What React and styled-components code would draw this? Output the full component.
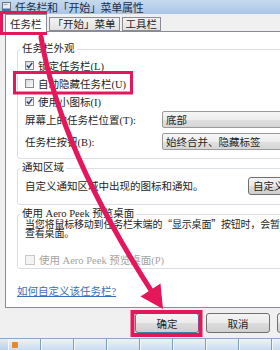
import React from "react";
import styled, { createGlobalStyle } from "styled-components";

const RED = "#e5175b";

const Global = createGlobalStyle`
  html, body { margin: 0; padding: 0; background: #f0f0f0; }
  body { width: 280px; height: 350px; overflow: hidden; }
`;

const Screen = styled.div`
  position: relative;
  width: 280px;
  height: 350px;
  overflow: hidden;
  background: #f0f0f0;
  font-family: "Liberation Serif", "Noto Sans CJK SC", serif;
  font-size: 10.5px;
  color: #1e1e1e;
`;

const Dialog = styled.div`
  width: 350px;
  display: flex;
  flex-direction: column;
`;

const TitleBar = styled.div`
  height: 14px;
  display: flex;
  align-items: center;
  gap: 3px;
  padding-left: 1px;
  background: linear-gradient(#c6daef, #a9c5e6);
  color: #1c2d4a;
  font-family: "Noto Sans CJK SC", sans-serif;
  font-size: 11px;
  letter-spacing: -0.3px;
  line-height: 14px;
`;

const Body = styled.div`
  padding: 0 5px;
  display: flex;
  flex-direction: column;
`;

const TabStrip = styled.div`
  height: 17px;
  display: flex;
  align-items: flex-end;
`;

const Tab = styled.div`
  box-sizing: border-box;
  height: ${(p) => (p.$active ? 18 : 14)}px;
  margin-bottom: ${(p) => (p.$active ? -1 : 0)}px;
  margin-left: ${(p) => (p.$first ? 0 : 2)}px;
  padding: 0 ${(p) => (p.$active ? 4 : 3)}px;
  border: 1px solid #898c95;
  border-bottom: ${(p) => (p.$active ? "none" : "1px solid #898c95")};
  background: ${(p) => (p.$active ? "#fff" : "linear-gradient(#f3f3f3, #e2e2e2)")};
  position: relative;
  z-index: ${(p) => (p.$active ? 1 : 0)};
  display: flex;
  align-items: center;
  font-family: "Noto Sans CJK SC", sans-serif;
  line-height: 12px;
`;

const Panel = styled.div`
  box-sizing: border-box;
  height: 277px;
  background: #fff;
  border: 1px solid #898c95;
  padding: 10px 12px 0 11px;
  display: flex;
  flex-direction: column;
`;

const Group = styled.fieldset`
  margin: ${(p) => p.$mt || 0}px 0 0;
  padding: 0 8px ${(p) => p.$pb || 0}px 7px;
  border: 1px solid #d9dfe4;
  border-radius: 3px;
  min-width: 0;
  display: flex;
  flex-direction: column;
`;

const Legend = styled.legend`
  margin-left: -5px;
  padding: 0 2px;
  height: 14px;
  line-height: 14px;
`;

const CheckRow = styled.div`
  height: ${(p) => p.$h || 18}px;
  margin-top: ${(p) => p.$mt || 0}px;
  display: flex;
  align-items: center;
  gap: 4px;
  color: ${(p) => (p.$disabled ? "#a3a3a3" : "inherit")};
`;

const Box = styled.span`
  box-sizing: border-box;
  width: ${(p) => (p.$disabled ? 10 : 9)}px;
  height: ${(p) => (p.$disabled ? 10 : 9)}px;
  border: 1px solid ${(p) => (p.$disabled ? "#c8c8c8" : "#8a8c8f")};
  background: ${(p) =>
    p.$disabled ? "#f4f4f4" : "linear-gradient(135deg, #d8d9db, #fbfbfb)"};
  display: inline-flex;
  align-items: center;
  justify-content: center;
  flex: none;
`;

const SelectRow = styled.div`
  height: 18px;
  margin-top: ${(p) => p.$mt || 0}px;
  display: grid;
  grid-template-columns: 137px 150px;
  align-items: center;
`;

const Select = styled.div`
  box-sizing: border-box;
  height: 17px;
  border: 1px solid #9a9a9a;
  border-radius: 2px;
  padding-left: 3px;
  background: linear-gradient(#f6f6f6 0%, #ededed 50%, #e0e0e0 51%, #d6d6d6 100%);
  display: flex;
  align-items: center;
`;

const NotifyRow = styled.div`
  height: 19px;
  margin-top: 1px;
  display: grid;
  grid-template-columns: 223px 60px;
  align-items: center;
`;

const Desc = styled.div`
  margin-top: -2px;
  font-size: 10px;
  line-height: 9px;
  letter-spacing: -0.2px;
  white-space: nowrap;
`;

const Quote = styled.span`
  font-family: "Noto Sans CJK SC", sans-serif;
`;

const Link = styled.div`
  margin-top: 16px;
  height: 14px;
  line-height: 14px;
  color: #3d6fb8;
  text-decoration: underline;
  align-self: flex-start;
`;

const Button = styled.div`
  box-sizing: border-box;
  width: ${(p) => p.$w || 64}px;
  height: ${(p) => p.$h || 20}px;
  border: 1px solid ${(p) => (p.$default ? "#3c7fb1" : "#707070")};
  border-radius: 3px;
  background: linear-gradient(#f4f4f4 0%, #ebebeb 50%, #dddddd 51%, #cfcfcf 100%);
  display: flex;
  align-items: center;
  justify-content: ${(p) => (p.$left ? "flex-start" : "center")};
  padding-left: ${(p) => (p.$left ? 4 : 0)}px;
  flex: none;
`;

const ButtonRow = styled.div`
  height: 30px;
  box-sizing: border-box;
  padding: 5px 0 0 135px;
  display: flex;
  gap: 7px;
`;

const Taskbar = styled.div`
  height: 12px;
  box-sizing: border-box;
  border-top: 1px solid #8aa6c9;
  background: linear-gradient(#e1ecf8, #b9d0ec);
  display: flex;
  padding-left: 8px;
  gap: 0;
`;

const TaskButton = styled.div`
  width: 33px;
  box-sizing: border-box;
  border-left: 1px solid #f4f8fd;
  border-right: 1px solid #7f9cc2;
  background: linear-gradient(#edf3fb, #c7dbf1);
  display: flex;
  align-items: center;
  padding-left: 3px;
`;

const TaskIcon = styled.span`
  width: 6px;
  height: 6px;
  border-radius: 1px;
  background: ${(p) => p.$c};
`;

const Overlay = styled.svg`
  position: absolute;
  left: 0;
  top: 0;
  pointer-events: none;
`;

const Check = () => (
  <svg width="7" height="7" viewBox="0 0 7 7">
    <path d="M0.8 3.6 L2.7 5.6 L6.2 0.9" fill="none" stroke="#2c3f6e" strokeWidth="1.4" />
  </svg>
);

const CheckBox = ({ checked, disabled, children, ...rest }) => (
  <CheckRow $disabled={disabled} {...rest}>
    <Box $disabled={disabled}>{checked && <Check />}</Box>
    <span>{children}</span>
  </CheckRow>
);

const TitleIcon = () => (
  <svg width="11" height="12" viewBox="0 0 11 12">
    <rect x="1.5" y="1.5" width="8" height="9" fill="#e9edf2" stroke="#6b7380" />
    <rect x="2" y="7.5" width="7" height="2.5" fill="#3f6fb5" />
    <rect x="2.5" y="3" width="4" height="1" fill="#9aa4b1" />
  </svg>
);

const Annotations = () => (
  <Overlay width="280" height="350" viewBox="0 0 280 350">
    <rect x="1.5" y="12.5" width="44" height="21" fill="none" stroke={RED} strokeWidth="3" />
    <rect x="14.5" y="72.5" width="117" height="20.5" fill="none" stroke={RED} strokeWidth="3" />
    <rect x="132.5" y="312" width="68" height="23" fill="none" stroke={RED} strokeWidth="4" />
    <path d="M41 37 Q 60 150 154 295" fill="none" stroke={RED} strokeWidth="5" strokeLinecap="round" />
    <polygon points="163,309 140.5,296.5 160.5,283.5" fill={RED} />
  </Overlay>
);

export default function App() {
  return (
    <Screen>
      <Global />
      <Dialog>
        <TitleBar>
          <TitleIcon />
          <span>任务栏和「开始」菜单属性</span>
        </TitleBar>
        <Body>
          <TabStrip>
            <Tab $active $first>任务栏</Tab>
            <Tab>「开始」菜单</Tab>
            <Tab>工具栏</Tab>
          </TabStrip>
          <Panel>
            <Group $pb={8}>
              <Legend>任务栏外观</Legend>
              <CheckBox checked>锁定任务栏(L)</CheckBox>
              <CheckBox>自动隐藏任务栏(U)</CheckBox>
              <CheckBox checked>使用小图标(I)</CheckBox>
              <SelectRow>
                <span>屏幕上的任务栏位置(T):</span>
                <Select>底部</Select>
              </SelectRow>
              <SelectRow $mt={4}>
                <span>任务栏按钮(B):</span>
                <Select>始终合并、隐藏标签</Select>
              </SelectRow>
            </Group>
            <Group $mt={2} $pb={9}>
              <Legend>通知区域</Legend>
              <NotifyRow>
                <span>自定义通知区域中出现的图标和通知。</span>
                <Button $w={60} $h={18} $left>自定义...</Button>
              </NotifyRow>
            </Group>
            <Group $mt={2}>
              <Legend>使用 Aero Peek 预览桌面</Legend>
              <Desc>
                当您将鼠标移动到任务栏末端的<Quote>“显示桌面”</Quote>按钮时，会暂时
                <br />
                查看桌面。
              </Desc>
              <CheckBox disabled $mt={13} $h={17}>使用 Aero Peek 预览桌面(P)</CheckBox>
            </Group>
            <Link>如何自定义该任务栏?</Link>
          </Panel>
        </Body>
        <ButtonRow>
          <Button $default>确定</Button>
          <Button>取消</Button>
          <Button>应用(A)</Button>
        </ButtonRow>
        <Taskbar>
          <TaskButton><TaskIcon $c="#e58a2a" /></TaskButton>
          <TaskButton />
          <TaskButton />
          <TaskButton />
          <TaskButton />
          <TaskButton />
          <TaskButton />
          <TaskButton />
          <TaskButton />
        </Taskbar>
      </Dialog>
      <Annotations />
    </Screen>
  );
}
